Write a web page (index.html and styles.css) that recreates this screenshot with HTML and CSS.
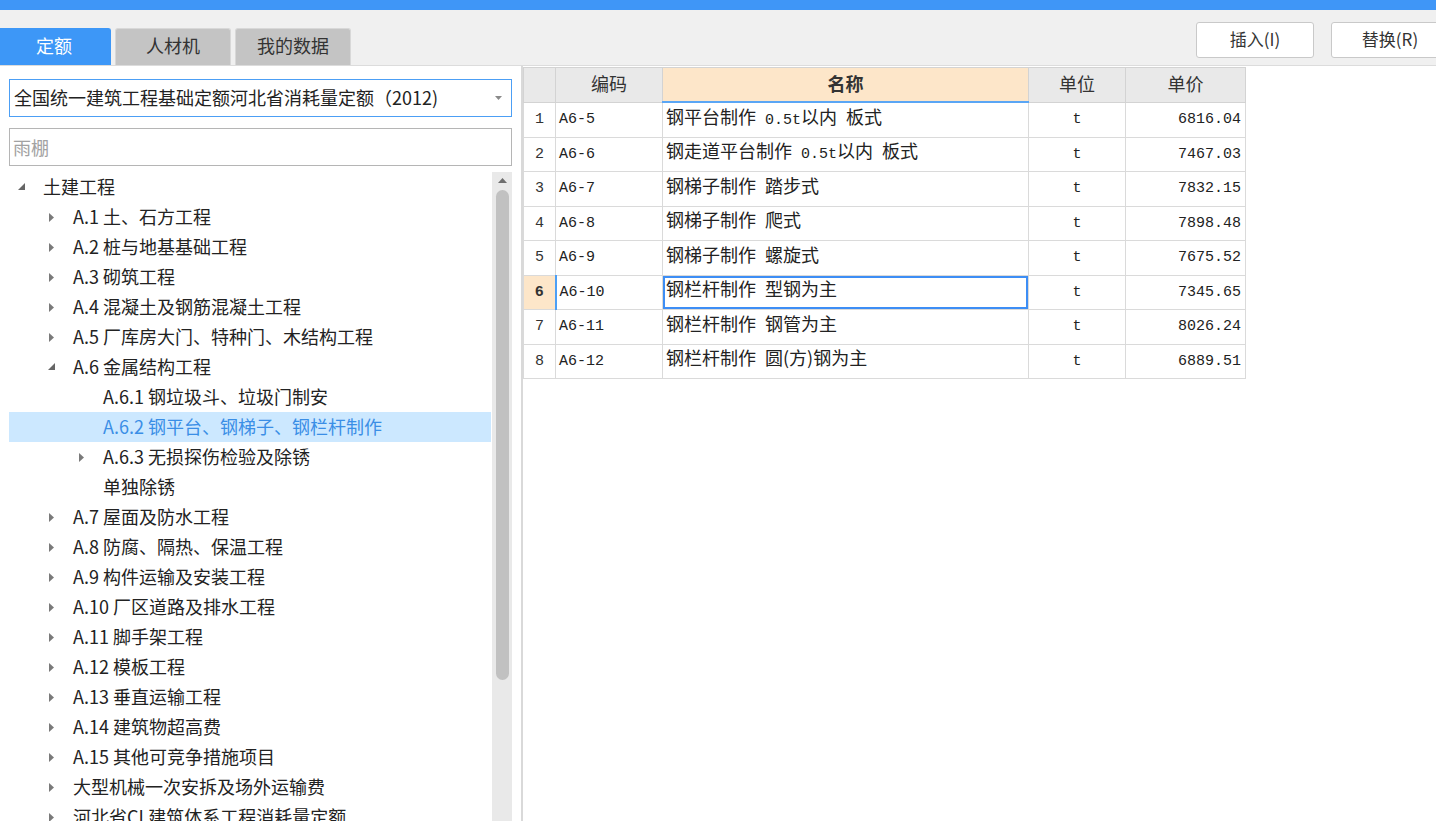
FILE: index.html
```html
<!DOCTYPE html>
<html lang="zh-CN">
<head>
<meta charset="utf-8">
<title>定额</title>
<link rel="stylesheet" href="styles.css">
</head>
<body>
<div class="topbar"></div>
<div class="toolbar">
  <div class="tabs">
    <div class="tab active">定额</div>
    <div class="tab">人材机</div>
    <div class="tab">我的数据</div>
  </div>
  <div class="actions">
    <button class="btn">插入(I)</button>
    <button class="btn">替换(R)</button>
  </div>
</div>
<div class="main">
  <div class="left">
    <div class="select">
      <span class="select-text">全国统一建筑工程基础定额河北省消耗量定额（2012)</span>
      <svg class="select-arrow" width="7" height="4" viewBox="0 0 7 4"><polygon points="0,0 7,0 3.5,4" fill="#8a8a8a"/></svg>
    </div>
    <div class="search">雨棚</div>
    <div class="tree-wrap">
      <div class="tree">
        <div class="row l0"><span class="exp"><svg width="8" height="8" viewBox="0 0 8 8"><polygon points="7,0 7,7 0,7" fill="#666"/></svg></span>土建工程</div>
        <div class="row l1"><span class="exp"><svg width="6" height="9" viewBox="0 0 6 9"><polygon points="0,0 5,4.5 0,9" fill="#7a7a7a"/></svg></span>A.1 土、石方工程</div>
        <div class="row l1"><span class="exp"><svg width="6" height="9" viewBox="0 0 6 9"><polygon points="0,0 5,4.5 0,9" fill="#7a7a7a"/></svg></span>A.2 桩与地基基础工程</div>
        <div class="row l1"><span class="exp"><svg width="6" height="9" viewBox="0 0 6 9"><polygon points="0,0 5,4.5 0,9" fill="#7a7a7a"/></svg></span>A.3 砌筑工程</div>
        <div class="row l1"><span class="exp"><svg width="6" height="9" viewBox="0 0 6 9"><polygon points="0,0 5,4.5 0,9" fill="#7a7a7a"/></svg></span>A.4 混凝土及钢筋混凝土工程</div>
        <div class="row l1"><span class="exp"><svg width="6" height="9" viewBox="0 0 6 9"><polygon points="0,0 5,4.5 0,9" fill="#7a7a7a"/></svg></span>A.5 厂库房大门、特种门、木结构工程</div>
        <div class="row l1"><span class="exp"><svg width="8" height="8" viewBox="0 0 8 8"><polygon points="7,0 7,7 0,7" fill="#666"/></svg></span>A.6 金属结构工程</div>
        <div class="row l2"><span class="exp"></span>A.6.1 钢垃圾斗、垃圾门制安</div>
        <div class="row l2 sel"><span class="exp"></span>A.6.2 钢平台、钢梯子、钢栏杆制作</div>
        <div class="row l2"><span class="exp"><svg width="6" height="9" viewBox="0 0 6 9"><polygon points="0,0 5,4.5 0,9" fill="#7a7a7a"/></svg></span>A.6.3 无损探伤检验及除锈</div>
        <div class="row l2"><span class="exp"></span>单独除锈</div>
        <div class="row l1"><span class="exp"><svg width="6" height="9" viewBox="0 0 6 9"><polygon points="0,0 5,4.5 0,9" fill="#7a7a7a"/></svg></span>A.7 屋面及防水工程</div>
        <div class="row l1"><span class="exp"><svg width="6" height="9" viewBox="0 0 6 9"><polygon points="0,0 5,4.5 0,9" fill="#7a7a7a"/></svg></span>A.8 防腐、隔热、保温工程</div>
        <div class="row l1"><span class="exp"><svg width="6" height="9" viewBox="0 0 6 9"><polygon points="0,0 5,4.5 0,9" fill="#7a7a7a"/></svg></span>A.9 构件运输及安装工程</div>
        <div class="row l1"><span class="exp"><svg width="6" height="9" viewBox="0 0 6 9"><polygon points="0,0 5,4.5 0,9" fill="#7a7a7a"/></svg></span>A.10 厂区道路及排水工程</div>
        <div class="row l1"><span class="exp"><svg width="6" height="9" viewBox="0 0 6 9"><polygon points="0,0 5,4.5 0,9" fill="#7a7a7a"/></svg></span>A.11 脚手架工程</div>
        <div class="row l1"><span class="exp"><svg width="6" height="9" viewBox="0 0 6 9"><polygon points="0,0 5,4.5 0,9" fill="#7a7a7a"/></svg></span>A.12 模板工程</div>
        <div class="row l1"><span class="exp"><svg width="6" height="9" viewBox="0 0 6 9"><polygon points="0,0 5,4.5 0,9" fill="#7a7a7a"/></svg></span>A.13 垂直运输工程</div>
        <div class="row l1"><span class="exp"><svg width="6" height="9" viewBox="0 0 6 9"><polygon points="0,0 5,4.5 0,9" fill="#7a7a7a"/></svg></span>A.14 建筑物超高费</div>
        <div class="row l1"><span class="exp"><svg width="6" height="9" viewBox="0 0 6 9"><polygon points="0,0 5,4.5 0,9" fill="#7a7a7a"/></svg></span>A.15 其他可竞争措施项目</div>
        <div class="row l1"><span class="exp"><svg width="6" height="9" viewBox="0 0 6 9"><polygon points="0,0 5,4.5 0,9" fill="#7a7a7a"/></svg></span>大型机械一次安拆及场外运输费</div>
        <div class="row l1"><span class="exp"><svg width="6" height="9" viewBox="0 0 6 9"><polygon points="0,0 5,4.5 0,9" fill="#7a7a7a"/></svg></span>河北省CL建筑体系工程消耗量定额</div>
      </div>
      <div class="scrollbar">
        <svg class="sb-up" width="9" height="5" viewBox="0 0 9 5"><polygon points="0,5 4.5,0 9,5" fill="#6e6e6e"/></svg>
        <div class="sb-thumb"></div>
      </div>
    </div>
  </div>
  <div class="splitter"></div>
  <div class="right">
    <table class="grid">
      <colgroup>
        <col class="c-num"><col class="c-code"><col class="c-name"><col class="c-unit"><col class="c-price">
      </colgroup>
      <thead>
        <tr><th></th><th>编码</th><th class="h-name">名称</th><th>单位</th><th>单价</th></tr>
      </thead>
      <tbody>
        <tr><td class="num">1</td><td class="code">A6-5</td><td class="name">钢平台制作<span class="m"> 0.5t</span>以内<span class="m"> </span>板式</td><td class="unit">t</td><td class="price">6816.04</td></tr>
        <tr><td class="num">2</td><td class="code">A6-6</td><td class="name">钢走道平台制作<span class="m"> 0.5t</span>以内<span class="m"> </span>板式</td><td class="unit">t</td><td class="price">7467.03</td></tr>
        <tr><td class="num">3</td><td class="code">A6-7</td><td class="name">钢梯子制作<span class="m"> </span>踏步式</td><td class="unit">t</td><td class="price">7832.15</td></tr>
        <tr><td class="num">4</td><td class="code">A6-8</td><td class="name">钢梯子制作<span class="m"> </span>爬式</td><td class="unit">t</td><td class="price">7898.48</td></tr>
        <tr><td class="num">5</td><td class="code">A6-9</td><td class="name">钢梯子制作<span class="m"> </span>螺旋式</td><td class="unit">t</td><td class="price">7675.52</td></tr>
        <tr class="cur"><td class="num">6</td><td class="code">A6-10</td><td class="name">钢栏杆制作<span class="m"> </span>型钢为主</td><td class="unit">t</td><td class="price">7345.65</td></tr>
        <tr><td class="num">7</td><td class="code">A6-11</td><td class="name">钢栏杆制作<span class="m"> </span>钢管为主</td><td class="unit">t</td><td class="price">8026.24</td></tr>
        <tr><td class="num">8</td><td class="code">A6-12</td><td class="name">钢栏杆制作<span class="m"> </span>圆(方)钢为主</td><td class="unit">t</td><td class="price">6889.51</td></tr>
      </tbody>
    </table>
  </div>
</div>
</body>
</html>
```
FILE: styles.css
```css
html, body {
  margin: 0;
  padding: 0;
}
body {
  width: 1436px;
  height: 821px;
  overflow: hidden;
  background: #fff;
  font-family: "Noto Sans CJK SC", "Noto Sans", sans-serif;
  color: #222;
}

.topbar {
  height: 10px;
  background: #3f96f7;
}

.toolbar {
  height: 55px;
  background: #f0f0f0;
  border-bottom: 1px solid #dcdcdc;
  display: flex;
  align-items: flex-end;
}

.tabs {
  display: flex;
  gap: 4px;
}
.tab {
  box-sizing: border-box;
  width: 116px;
  height: 37px;
  display: flex;
  align-items: center;
  justify-content: center;
  padding-bottom: 4px;
  background: #c4c4c4;
  border: 1px solid #d8d8d8;
  border-bottom: none;
  border-radius: 3px 3px 0 0;
  font-size: 18px;
  color: #333;
}
.tab.active {
  width: 111px;
  padding-right: 3px;
  background: #3d97f7;
  border-color: #3d97f7;
  border-radius: 0 3px 0 0;
  color: #fff;
}

.actions {
  margin-left: auto;
  margin-right: -13px;
  align-self: flex-start;
  margin-top: 12px;
  display: flex;
  gap: 17px;
}
.btn {
  box-sizing: border-box;
  width: 118px;
  height: 36px;
  background: #fff;
  border: 1px solid #c9c9c9;
  border-radius: 3px;
  font-family: "Noto Sans CJK SC", sans-serif;
  font-size: 17px;
  color: #333;
  padding: 0 0 4px 0;
}

.main {
  display: flex;
  height: 755px;
}

.left {
  box-sizing: border-box;
  width: 521px;
  padding-left: 9px;
  background: #fff;
}

.select {
  box-sizing: border-box;
  margin-top: 13px;
  width: 503px;
  height: 38px;
  border: 1px solid #4c9ff5;
  display: flex;
  align-items: center;
  padding-left: 4px;
  padding-bottom: 2px;
  font-size: 18px;
  color: #222;
}
.select-arrow {
  margin-left: auto;
  margin-right: 9px;
  margin-top: 2px;
}

.search {
  box-sizing: border-box;
  margin-top: 11px;
  width: 503px;
  height: 38px;
  border: 1px solid #b5b5b5;
  display: flex;
  align-items: center;
  padding-left: 3px;
  padding-bottom: 1px;
  font-size: 18px;
  color: #a2a2a2;
}

.tree-wrap {
  margin-top: 6px;
  display: flex;
  height: 649px;
  overflow: hidden;
}
.tree {
  width: 482px;
  flex: none;
}
.row {
  box-sizing: border-box;
  height: 30px;
  display: flex;
  align-items: center;
  padding-bottom: 2px;
  font-size: 18px;
  line-height: 26px;
  color: #222;
  white-space: nowrap;
}
.row.l0 { padding-left: 1px; }
.row.l1 { padding-left: 31px; }
.row.l2 { padding-left: 61px; }
.row.sel {
  background: #cce8ff;
  color: #3a8ee6;
}
.exp {
  width: 24px;
  margin-right: 9px;
  margin-top: 2px;
  display: flex;
  justify-content: center;
  align-items: center;
  flex: none;
}

.scrollbar {
  margin-left: 1px;
  width: 20px;
  flex: none;
  background: #e9e9e9;
  display: flex;
  flex-direction: column;
  align-items: center;
}
.sb-up {
  margin-top: 6px;
}
.sb-thumb {
  margin-top: 7px;
  width: 13px;
  height: 490px;
  border-radius: 7px;
  background: #c1c1c1;
}

.splitter {
  width: 2px;
  background: #d9d9d9;
  flex: none;
}

.right {
  flex: 1;
  background: #fff;
}

.grid {
  margin-top: 1px;
  border-collapse: collapse;
  table-layout: fixed;
  width: 722px;
}
.c-num { width: 32px; }
.c-code { width: 107px; }
.c-name { width: 366px; }
.c-unit { width: 97px; }
.c-price { width: 120px; }

.grid th {
  height: 29px;
  padding: 0 0 4px 0;
  background: #e9e9e9;
  border: 1px solid #d3d3d3;
  font-weight: normal;
  font-size: 18px;
  line-height: 22px;
  color: #333;
  text-align: center;
}
.grid th.h-name {
  background: #fde6c9;
  font-weight: bold;
  border-bottom: 2px solid #5aa6f5;
}

.grid td {
  height: 33.5px;
  padding: 0 3px;
  border: 1px solid #dadada;
  white-space: nowrap;
  overflow: hidden;
  color: #222;
}
.grid td.num {
  padding: 0;
  text-align: center;
  font-family: "Liberation Mono", monospace;
  font-size: 15px;
  color: #333;
}
.grid td.code {
  font-family: "Liberation Mono", monospace;
  font-size: 15px;
}
.grid td.name {
  height: 30.5px;
  padding-bottom: 3px;
  font-family: "Noto Sans CJK SC", sans-serif;
  font-size: 18px;
  line-height: 22px;
}
.m {
  font-family: "Liberation Mono", monospace;
  font-size: 15px;
  white-space: pre;
}
.grid td.unit {
  text-align: center;
  font-family: "Liberation Mono", monospace;
  font-size: 15px;
}
.grid td.price {
  text-align: right;
  padding-right: 4px;
  font-family: "Liberation Mono", monospace;
  font-size: 15px;
}

.grid tr.cur td.num {
  background: #fde6c9;
  font-weight: bold;
  border-right: 2px solid #4c9ff5;
}
.grid tr.cur td.name {
  box-shadow: inset 0 0 0 2px #3d8ef5;
}
```
